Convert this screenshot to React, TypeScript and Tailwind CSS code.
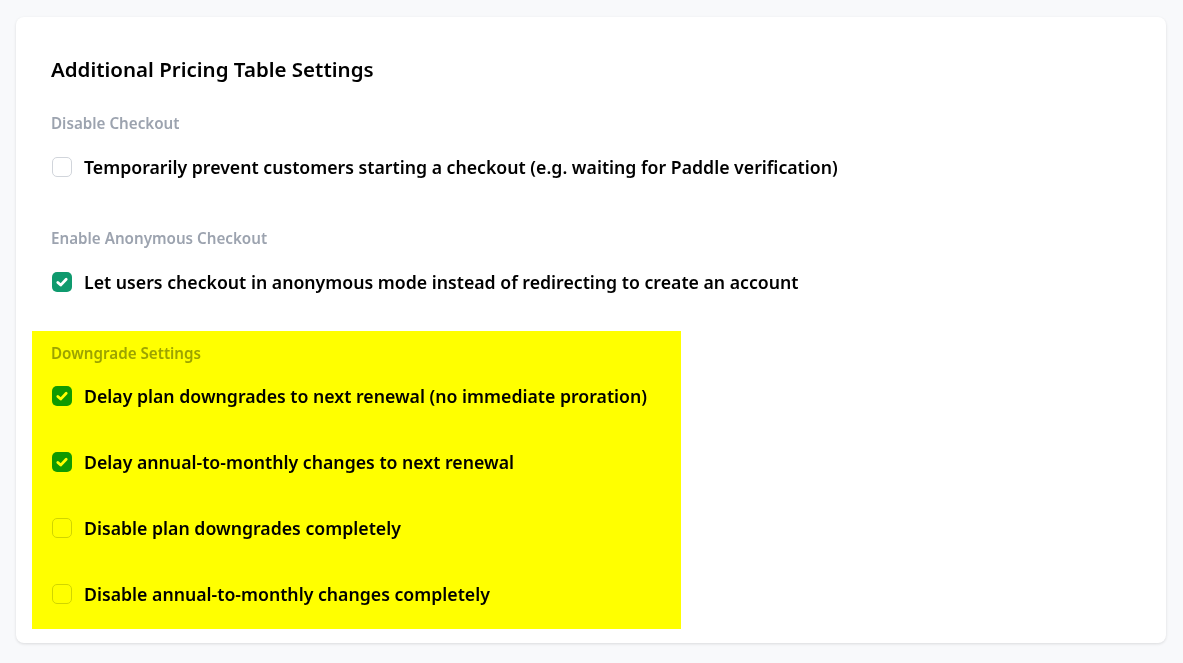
import React from 'react';

const font = { fontFamily: '"Noto Sans", "Open Sans", sans-serif' };

type BoxProps = { checked: boolean };

const Box: React.FC<BoxProps> = ({ checked }) =>
  checked ? (
    <span className="w-5 h-5 rounded-[5px] bg-[#0f9a6e] flex items-center justify-center shrink-0">
      <svg width="14" height="14" viewBox="0 0 14 14" fill="none">
        <path d="M2.8 7.4 L5.7 10.1 L11.2 4.2" stroke="#ffffff" strokeWidth="2.8" strokeLinecap="round" strokeLinejoin="round" />
      </svg>
    </span>
  ) : (
    <span className="w-5 h-5 rounded-[5px] border border-[#d1d5db] bg-white shrink-0" />
  );

const Option: React.FC<{ checked: boolean; label: string }> = ({ checked, label }) => (
  <label className="flex items-center gap-[12px] h-6 pl-px">
    <Box checked={checked} />
    <span className="text-[17.7px] font-semibold text-black leading-6 whitespace-nowrap">{label}</span>
  </label>
);

const SectionLabel: React.FC<{ children: React.ReactNode }> = ({ children }) => (
  <div className="text-[15.2px] font-semibold text-[#9ca3af] leading-5">{children}</div>
);

export default function App() {
  return (
    <div className="min-h-[663px] bg-[#f8f9fb] pt-[17px] px-4 pb-5" style={font}>
      <div className="w-[1150px] h-[626px] bg-white rounded-lg shadow-[0_1px_3px_rgba(0,0,0,0.12)] pt-[38px] px-[35px]">
        <h2 className="text-[20.5px] font-semibold text-black leading-7">Additional Pricing Table Settings</h2>

        {/* Disable Checkout */}
        <div className="mt-[30px]">
          <SectionLabel>Disable Checkout</SectionLabel>
          <div className="mt-[22px]">
            <Option checked={false} label="Temporarily prevent customers starting a checkout (e.g. waiting for Paddle verification)" />
          </div>
        </div>

        {/* Anonymous Checkout */}
        <div className="mt-[49px]">
          <SectionLabel>Enable Anonymous Checkout</SectionLabel>
          <div className="mt-[22px]">
            <Option checked={true} label="Let users checkout in anonymous mode instead of redirecting to create an account" />
          </div>
        </div>

        {/* Downgrade Settings (highlighted) */}
        <div className="mt-[37px] -ml-[19px] w-[649px] bg-[#ffff00] pt-3 pb-[23px] pl-[19px]">
          <div className="mix-blend-multiply">
            <SectionLabel>Downgrade Settings</SectionLabel>
            <div className="mt-[21px] flex flex-col gap-[42px]">
              <Option checked={true} label="Delay plan downgrades to next renewal (no immediate proration)" />
              <Option checked={true} label="Delay annual-to-monthly changes to next renewal" />
              <Option checked={false} label="Disable plan downgrades completely" />
              <Option checked={false} label="Disable annual-to-monthly changes completely" />
            </div>
          </div>
        </div>
      </div>
    </div>
  );
}
